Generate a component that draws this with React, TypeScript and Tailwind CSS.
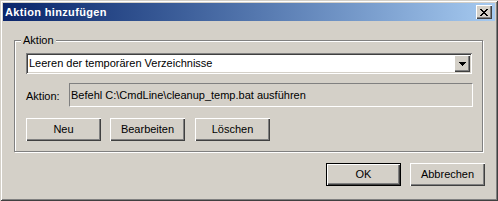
import React from 'react';

const raised =
  'bg-[#d4d0c8] shadow-[inset_1px_1px_0_#fff,inset_-1px_-1px_0_#404040,inset_-2px_-2px_0_#808080]';

function CloseGlyph() {
  const rows = ['XX....XX', '.XX..XX.', '..XXXX..', '...XX...', '..XXXX..', '.XX..XX.', 'XX....XX'];
  return (
    <svg width="8" height="7" viewBox="0 0 8 7" shapeRendering="crispEdges">
      {rows.map((r, y) =>
        r.split('').map((c, x) => (c === 'X' ? <rect key={`${x}-${y}`} x={x} y={y} width="1" height="1" fill="#000" /> : null))
      )}
    </svg>
  );
}

function ArrowDown() {
  return (
    <svg width="7" height="4" viewBox="0 0 7 4" shapeRendering="crispEdges">
      <rect x="0" y="0" width="7" height="1" fill="#000" />
      <rect x="1" y="1" width="5" height="1" fill="#000" />
      <rect x="2" y="2" width="3" height="1" fill="#000" />
      <rect x="3" y="3" width="1" height="1" fill="#000" />
    </svg>
  );
}

function Button({ label, isDefault = false }: { label: string; isDefault?: boolean }) {
  if (isDefault) {
    return (
      <button className="w-[75px] h-[23px] border border-black p-0 bg-[#d4d0c8]">
        <span className={`flex w-full h-full items-center justify-center ${raised}`}>{label}</span>
      </button>
    );
  }
  return (
    <button className={`w-[75px] h-[23px] flex items-center justify-center ${raised}`}>{label}</button>
  );
}

export default function App() {
  return (
    <div className="w-[498px] h-[201px] flex flex-col p-[3px] bg-[#d4d0c8] text-[11px] leading-[13px] text-black font-[Tahoma,'Liberation_Sans',Arial,sans-serif] shadow-[inset_1px_1px_0_#d4d0c8,inset_-1px_-1px_0_#404040,inset_2px_2px_0_#fff,inset_-2px_-2px_0_#808080]">
      {/* caption */}
      <div className="h-[18px] flex items-center justify-between pl-[2px] pr-[3px] bg-linear-to-r from-[#0a246a] to-[#a6caf0]">
        <span className="font-bold text-white tracking-[0.35px]">Aktion hinzufügen</span>
        <div className={`w-[16px] h-[14px] flex items-center justify-center ${raised}`}>
          <CloseGlyph />
        </div>
      </div>

      {/* client area */}
      <div className="flex-1 flex flex-col">
        <div className="relative ml-[11px] mr-[12px] mt-[19px] h-[112px] border border-[#808080] shadow-[1px_1px_0_#fff,inset_1px_1px_0_#fff] pt-[12px] pl-[11px] pr-[10px] flex flex-col">
          <span className="absolute -top-[7px] left-[6px] px-[2px] bg-[#d4d0c8]">Aktion</span>

          <div className="h-[21px] flex p-[2px] bg-white shadow-[inset_1px_1px_0_#808080,inset_-1px_-1px_0_#fff,inset_2px_2px_0_#404040,inset_-2px_-2px_0_#d4d0c8]">
            <div className="flex-1 flex items-center pl-[1px]">Leeren der temporären Verzeichnisse</div>
            <div className={`w-[16px] h-[17px] flex items-center justify-center pt-[1px] ${raised}`}>
              <ArrowDown />
            </div>
          </div>

          <div className="mt-[9px] flex items-center">
            <span className="w-[43px] pt-[2px]">Aktion:</span>
            <div className="flex-1 mr-[-1px] h-[24px] flex items-center pl-[1px] border border-t-[#808080] border-l-[#808080] border-b-white border-r-white">
              Befehl C:\CmdLine\cleanup_temp.bat ausführen
            </div>
          </div>

          <div className="mt-[11px] flex">
            <Button label="Neu" />
            <div className="ml-[9px]">
              <Button label="Bearbeiten" />
            </div>
            <div className="ml-[10px]">
              <Button label="Löschen" />
            </div>
          </div>
        </div>

        <div className="mt-[11px] flex justify-end gap-[9px] pr-[10px]">
          <Button label="OK" isDefault />
          <Button label="Abbrechen" />
        </div>
      </div>
    </div>
  );
}
